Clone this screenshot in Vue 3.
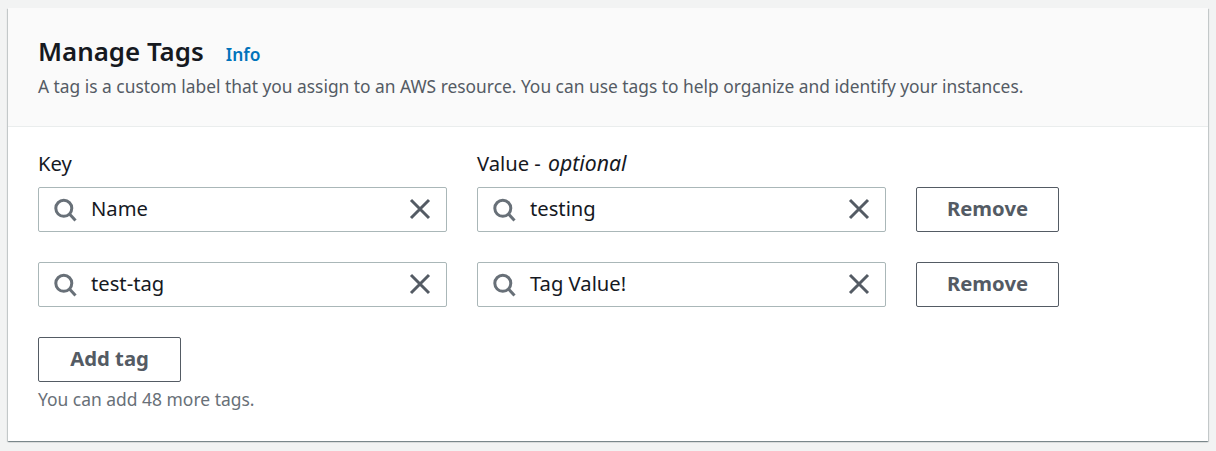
<script setup>
const rows = [
  { key: 'Name', value: 'testing' },
  { key: 'test-tag', value: 'Tag Value!' },
]
</script>

<template>
  <div class="page">
    <section class="card">
      <header class="head">
        <div class="title-row">
          <h2 class="title">Manage Tags</h2>
          <a class="info">Info</a>
        </div>
        <p class="desc">A tag is a custom label that you assign to an AWS resource. You can use tags to help organize and identify your instances.</p>
      </header>
      <div class="body">
        <div class="labels">
          <div class="label">Key</div>
          <div class="label">Value - <i class="opt">optional</i></div>
        </div>
        <div class="rows">
          <div v-for="row in rows" :key="row.key" class="row">
            <div v-for="text in [row.key, row.value]" :key="text" class="field">
              <svg class="search" width="24" height="24" viewBox="0 0 24 24" fill="none">
                <circle cx="9.8" cy="10.3" r="8" stroke="#687078" stroke-width="3" />
                <path d="M15.5 16 L21.5 22.5" stroke="#687078" stroke-width="3" />
              </svg>
              <span class="text">{{ text }}</span>
              <svg class="clear" width="24" height="24" viewBox="0 0 24 24" fill="none">
                <path d="M3 3 L21 21 M21 3 L3 21" stroke="#545b64" stroke-width="3" />
              </svg>
            </div>
            <button class="btn">Remove</button>
          </div>
        </div>
        <button class="btn add">Add tag</button>
        <p class="hint">You can add 48 more tags.</p>
      </div>
    </section>
  </div>
</template>

<style>
html, body { margin: 0; background: #f2f3f3; }
</style>

<style scoped>
.page {
  width: 1216px;
  height: 451px;
  padding: 8px;
  box-sizing: border-box;
  background: #f2f3f3;
  font-family: "Noto Sans", sans-serif;
  overflow: hidden;
}
.card {
  width: 1200px;
  height: 433px;
  background: #fff;
  box-shadow: 0 1px 1px 0 rgba(0, 28, 36, 0.3), 1px 1px 1px 0 rgba(0, 28, 36, 0.15), -1px 1px 1px 0 rgba(0, 28, 36, 0.15);
}
.head {
  height: 119px;
  box-sizing: border-box;
  padding: 26px 30px 0;
  background: #fafafa;
  border-bottom: 1px solid #eaeded;
}
.title-row { display: flex; align-items: baseline; gap: 22px; }
.title { margin: 0; font-size: 25.9px; line-height: 34px; font-weight: 600; color: #16191f; }
.info { font-size: 17.4px; font-weight: 600; color: #0073bb; }
.desc { margin: 6px 0 0; font-size: 17.37px; line-height: 24px; color: #545b64; }
.body { padding: 23px 30px 0; }
.labels { display: flex; gap: 30px; }
.label { width: 409px; font-size: 20.2px; line-height: 26px; color: #16191f; }
.opt { font-size: 21.2px; margin-left: 2px; }
.rows { display: flex; flex-direction: column; gap: 30px; margin-top: 11px; }
.row { display: flex; gap: 30px; }
.field {
  width: 409px;
  height: 45px;
  box-sizing: border-box;
  border: 1px solid #aab7b8;
  border-radius: 2px;
  display: flex;
  align-items: center;
  padding: 0 14px 0 15px;
  background: #fff;
}
.search { flex: none; }
.text { flex: 1; margin-left: 13px; padding-bottom: 3px; font-size: 20.2px; color: #16191f; }
.clear { flex: none; margin-bottom: 2px; }
.btn {
  width: 143px;
  height: 45px;
  box-sizing: border-box;
  border: 1px solid #545b64;
  border-radius: 2px;
  background: #fff;
  color: #545b64;
  font-family: inherit;
  font-size: 20.3px;
  font-weight: 700;
  padding: 0 0 3px;
}
.add { display: block; margin-top: 30px; }
.hint { margin: 5px 0 0; font-size: 17.45px; line-height: 24px; color: #687078; }
</style>
